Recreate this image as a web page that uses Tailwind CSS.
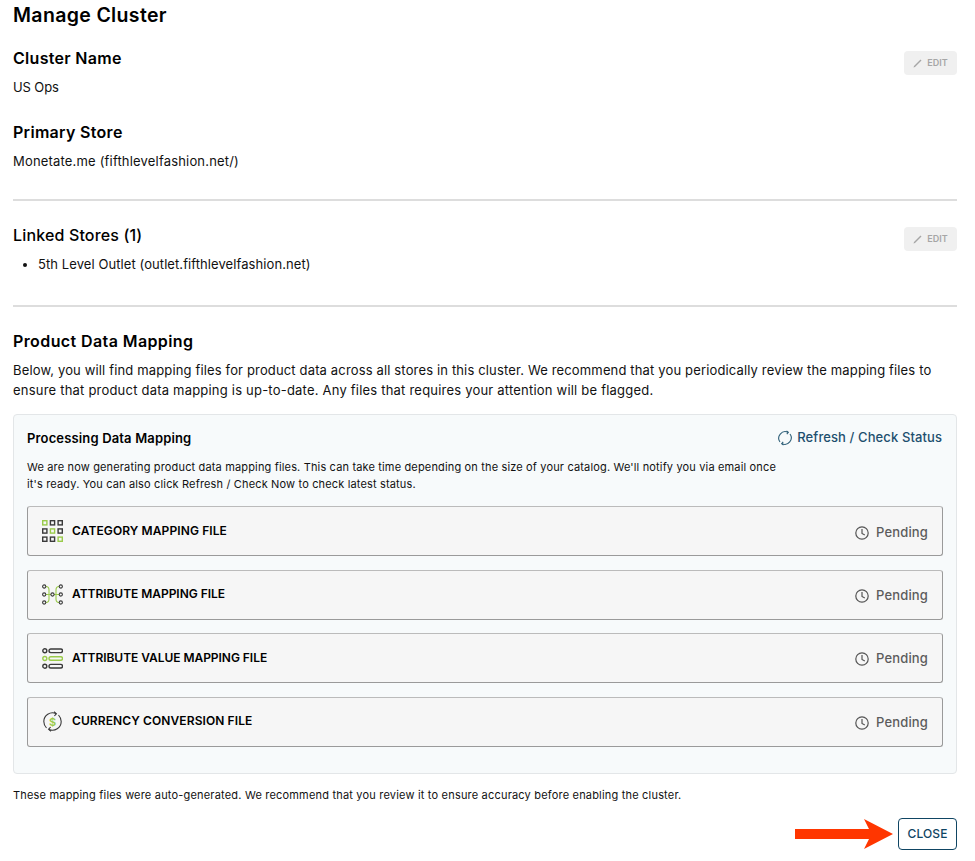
<!DOCTYPE html>
<html lang="en">
  <head>
    <meta charset="UTF-8" />
    <script src="https://cdn.jsdelivr.net/npm/@tailwindcss/browser@4"></script>
    <title>Manage Cluster</title>
  </head>
  <body class="bg-white font-['Inter',sans-serif] text-[#111] overflow-hidden">
    <main class="w-[975px] h-[861px] pl-[13px] pr-[18px] overflow-hidden">
      <h1 class="h-[30px] pt-[3px] text-[19.5px] leading-[25px] font-semibold tracking-[0.35px] text-black">Manage Cluster</h1>

      <!-- Cluster info -->
      <section class="flex justify-between h-[171px] border-b-2 border-[#ddd]">
        <div>
          <h2 class="mt-[17px] text-[16px] leading-[22px] font-semibold tracking-[0.3px] text-black">Cluster Name</h2>
          <p class="mt-[8px] text-[13px] leading-[20px] tracking-[-0.1px]">US Ops</p>
          <h2 class="mt-[24px] text-[16px] leading-[22px] font-semibold tracking-[0.3px] text-black">Primary Store</h2>
          <p class="mt-[8px] text-[13px] leading-[20px] tracking-[0.18px]">Monetate.me (fifthlevelfashion.net/)</p>
        </div>
        <button class="mt-[21px] w-[53px] h-[24px] flex items-center justify-center gap-[4px] rounded bg-[#f0f0f0] text-[#a6a6a6] text-[9px] font-semibold">
          <svg class="w-[10px] h-[10px]" viewBox="0 0 10 10" fill="currentColor"><path d="M0.5 9.5 L1 8 L7.5 1.5 L8.5 2.5 L2 9 Z"/></svg>
          EDIT
        </button>
      </section>

      <!-- Linked stores -->
      <section class="flex justify-between h-[106px] border-b-2 border-[#ddd]">
        <div>
          <h2 class="mt-[23px] text-[16px] leading-[22px] font-medium tracking-[0.15px] text-black">Linked Stores (1)</h2>
          <ul class="mt-[8px] ml-[25px] list-disc text-[13px] leading-[20px] tracking-[0.08px]">
            <li>5th Level Outlet (outlet.fifthlevelfashion.net)</li>
          </ul>
        </div>
        <button class="mt-[26px] w-[53px] h-[24px] flex items-center justify-center gap-[4px] rounded bg-[#f0f0f0] text-[#a6a6a6] text-[9px] font-semibold">
          <svg class="w-[10px] h-[10px]" viewBox="0 0 10 10" fill="currentColor"><path d="M0.5 9.5 L1 8 L7.5 1.5 L8.5 2.5 L2 9 Z"/></svg>
          EDIT
        </button>
      </section>

      <!-- Product data mapping -->
      <section>
        <h2 class="mt-[23px] text-[16px] leading-[22px] font-semibold tracking-[0.4px] text-black">Product Data Mapping</h2>
        <p class="mt-[8px] text-[13px] leading-[20px] tracking-[0.15px]">Below, you will find mapping files for product data across all stores in this cluster. We recommend that you periodically review the mapping files to<br /><span class="tracking-[0.21px]">ensure that product data mapping is up-to-date. Any files that requires your attention will be flagged.</span></p>

        <div class="mt-[14px] h-[360px] px-[13px] border border-[#e3e6e8] rounded bg-[#f7fafb]">
          <div class="flex justify-between items-center pt-[1px] h-[44px]">
            <h3 class="text-[13px] leading-[18px] font-semibold tracking-[0.15px] text-black">Processing Data Mapping</h3>
            <div class="flex items-center gap-[4px] mr-[1px] text-[13px] tracking-[0.1px] text-[#1d4f6e] font-medium">
              <svg class="w-[16px] h-[16px]" viewBox="0 0 16 16" fill="none" stroke="#2f5f78" stroke-width="1.1"><path d="M3 12 A6.5 6.5 0 0 1 11 2.3"/><path d="M13 4 A6.5 6.5 0 0 1 5 13.7"/><path d="M9.5 1 L11.3 2.4 L9.8 4.2"/><path d="M6.5 15 L4.7 13.6 L6.2 11.8"/></svg>
              Refresh / Check Status
            </div>
          </div>
          <p class="w-[760px] text-[11px] leading-[17px] tracking-[0.155px]">We are now generating product data mapping files. This can take time depending on the size of your catalog. We'll notify you via email once<br />it's ready. You can also click Refresh / Check Now to check latest status.</p>

          <div class="mt-[13px] flex flex-col gap-[13.5px]">
            <div class="h-[50px] flex items-center px-[14px] border border-[#9a9a9a] border-t-[#bbb] rounded-[3px] bg-[#f6f6f6]">
              <svg class="w-[21px] h-[22px] shrink-0" viewBox="0 0 21 22" fill="none" stroke="#3a3a3a" stroke-width="1.4">
                <rect x="0.7" y="0.7" width="4.2" height="4.2" stroke="#9acb4a"/><rect x="8.4" y="0.7" width="4.2" height="4.2"/><rect x="16.1" y="0.7" width="4.2" height="4.2"/>
                <rect x="0.7" y="8.9" width="4.2" height="4.2"/><rect x="8.4" y="8.9" width="4.2" height="4.2" stroke="#9acb4a"/><rect x="16.1" y="8.9" width="4.2" height="4.2"/>
                <rect x="0.7" y="17.1" width="4.2" height="4.2"/><rect x="8.4" y="17.1" width="4.2" height="4.2"/><rect x="16.1" y="17.1" width="4.2" height="4.2" stroke="#9acb4a"/>
              </svg>
              <span class="ml-[9px] text-[12px] font-semibold tracking-[0.1px] text-black">CATEGORY MAPPING FILE</span>
              <span class="ml-auto mt-[3px] flex items-center gap-[7px] text-[13px] font-medium tracking-[0.15px] text-[#5c5c5c]">
                <svg class="w-[14px] h-[14px]" viewBox="0 0 14 14" fill="none" stroke="#555" stroke-width="1.2"><circle cx="7" cy="7" r="6.2"/><path d="M7 3 V7.5 L9.8 9"/></svg>
                Pending
              </span>
            </div>
            <div class="h-[50px] flex items-center px-[14px] border border-[#9a9a9a] border-t-[#bbb] rounded-[3px] bg-[#f6f6f6]">
              <svg class="w-[21px] h-[21px] shrink-0" viewBox="0 0 21 21" fill="none" stroke="#3a3a3a" stroke-width="1.1">
                <path d="M4 2.5 Q7 2.5 7 6 V15 Q7 18.5 4 18.5 M4 10.5 H9 M12 10.5 H17 M17 2.5 Q14 2.5 14 6 V15 Q14 18.5 17 18.5" stroke="#9acb4a"/>
                <circle cx="2.2" cy="2.5" r="1.6"/><circle cx="2.2" cy="10.5" r="1.6"/><circle cx="2.2" cy="18.5" r="1.6"/>
                <circle cx="10.5" cy="10.5" r="1.6"/>
                <circle cx="18.8" cy="2.5" r="1.6"/><circle cx="18.8" cy="10.5" r="1.6"/><circle cx="18.8" cy="18.5" r="1.6"/>
              </svg>
              <span class="ml-[9px] mb-[1px] text-[12px] font-semibold tracking-[-0.04px] text-black">ATTRIBUTE MAPPING FILE</span>
              <span class="ml-auto mt-[2px] flex items-center gap-[7px] text-[13px] font-medium tracking-[0.15px] text-[#5c5c5c]">
                <svg class="w-[14px] h-[14px]" viewBox="0 0 14 14" fill="none" stroke="#555" stroke-width="1.2"><circle cx="7" cy="7" r="6.2"/><path d="M7 3 V7.5 L9.8 9"/></svg>
                Pending
              </span>
            </div>
            <div class="h-[50px] flex items-center px-[14px] border border-[#9a9a9a] border-t-[#bbb] rounded-[3px] bg-[#f6f6f6]">
              <svg class="w-[21px] h-[21px] shrink-0" viewBox="0 0 21 21" fill="none" stroke="#3a3a3a" stroke-width="1.4">
                <circle cx="2.8" cy="2.8" r="2"/><rect x="7" y="1" width="13.5" height="3.6" rx="1.8"/>
                <circle cx="2.8" cy="10.5" r="2" stroke="#9acb4a"/><rect x="7" y="8.7" width="13.5" height="3.6" rx="1.8" stroke="#9acb4a"/>
                <circle cx="2.8" cy="18.2" r="2"/><rect x="7" y="16.4" width="13.5" height="3.6" rx="1.8"/>
              </svg>
              <span class="ml-[9px] text-[12px] font-semibold tracking-[-0.04px] text-black">ATTRIBUTE VALUE MAPPING FILE</span>
              <span class="ml-auto mt-[2px] flex items-center gap-[7px] text-[13px] font-medium tracking-[0.15px] text-[#5c5c5c]">
                <svg class="w-[14px] h-[14px]" viewBox="0 0 14 14" fill="none" stroke="#555" stroke-width="1.2"><circle cx="7" cy="7" r="6.2"/><path d="M7 3 V7.5 L9.8 9"/></svg>
                Pending
              </span>
            </div>
            <div class="h-[50px] flex items-center px-[14px] border border-[#9a9a9a] border-t-[#bbb] rounded-[3px] bg-[#f6f6f6]">
              <svg class="w-[21px] h-[21px] shrink-0" viewBox="0 0 21 21" fill="none" stroke="#3a3a3a" stroke-width="1.1">
                <path d="M4.5 17 Q1.8 14 1.8 10.5 A8.7 8.7 0 0 1 14 2.6"/><path d="M16.5 4 Q19.2 7 19.2 10.5 A8.7 8.7 0 0 1 7 18.4"/><path d="M12 0.8 L14.4 2.7 L12.4 5"/><path d="M9 20.2 L6.6 18.3 L8.6 16"/>
                <text x="10.5" y="14.5" text-anchor="middle" font-size="11" font-weight="600" fill="#9acb4a" stroke="none" font-family="Inter, sans-serif">$</text>
              </svg>
              <span class="ml-[9px] mb-[1px] text-[12px] font-semibold tracking-[0.1px] text-black">CURRENCY CONVERSION FILE</span>
              <span class="ml-auto mt-[2px] flex items-center gap-[7px] text-[13px] font-medium tracking-[0.15px] text-[#5c5c5c]">
                <svg class="w-[14px] h-[14px]" viewBox="0 0 14 14" fill="none" stroke="#555" stroke-width="1.2"><circle cx="7" cy="7" r="6.2"/><path d="M7 3 V7.5 L9.8 9"/></svg>
                Pending
              </span>
            </div>
          </div>
        </div>

        <p class="mt-[13px] text-[11px] leading-[17px] tracking-[0.19px]">These mapping files were auto-generated. We recommend that you review it to ensure accuracy before enabling the cluster.</p>

        <div class="mt-[14px] flex justify-end items-center gap-[5px]">
          <svg class="w-[98px] h-[30px]" viewBox="0 0 98 30" fill="#ff3600"><path d="M0 10 H74 L69 0 L98 15 L69 30 L74 20 H0 Z"/></svg>
          <button class="w-[59px] h-[32px] border border-[#0f4563] rounded text-[12px] font-medium tracking-[0.1px] text-[#0f4563]">CLOSE</button>
        </div>
      </section>
    </main>
  </body>
</html>
